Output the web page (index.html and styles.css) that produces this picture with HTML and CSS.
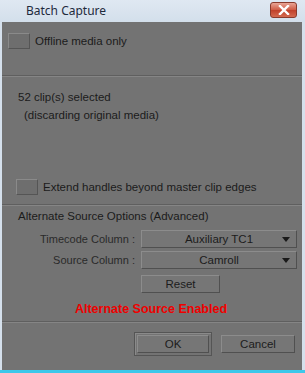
FILE: index.html
```html
<!DOCTYPE html>
<html lang="en">
<head>
  <meta charset="UTF-8" />
  <title>Batch Capture</title>
  <link rel="stylesheet" href="styles.css">
</head>
<body>
  <div class="window">
    <div class="titlebar">
      <span class="title">Batch Capture</span>
      <span class="close-btn">
        <svg width="12" height="10" viewBox="0 0 12 10">
          <path d="M2 1 L10 9 M10 1 L2 9" stroke="#fff" stroke-width="2.4" stroke-linecap="square" />
        </svg>
      </span>
    </div>

    <div class="content">
      <div class="section top">
        <label class="check-row">
          <span class="checkbox"></span>
          <span>Offline media only</span>
        </label>
      </div>

      <div class="section info">
        <div class="line">52 clip(s) selected</div>
        <div class="line indent">(discarding original media)</div>
        <label class="check-row extend">
          <span class="checkbox"></span>
          <span>Extend handles beyond master clip edges</span>
        </label>
      </div>

      <div class="section alt">
        <div class="alt-title">Alternate Source Options (Advanced)</div>
        <div class="form-row">
          <span class="form-label">Timecode Column :</span>
          <span class="dropdown">Auxiliary TC1<span class="arrow"></span></span>
        </div>
        <div class="form-row">
          <span class="form-label">Source Column :</span>
          <span class="dropdown">Camroll<span class="arrow"></span></span>
        </div>
        <div class="form-row reset-row">
          <span class="form-label"></span>
          <button class="btn reset-btn">Reset</button>
        </div>
        <div class="enabled">Alternate Source Enabled</div>
      </div>

      <div class="section buttons">
        <span class="ok-wrap"><button class="btn ok-btn">OK</button></span>
        <button class="btn cancel-btn">Cancel</button>
      </div>
    </div>
  </div>
</body>
</html>
```

FILE: styles.css
```css
body {
  margin: 0;
  background: #e9eef4;
  font-family: "Liberation Sans", Arial, sans-serif;
}

.window {
  width: 305px;
  height: 373px;
  display: flex;
  flex-direction: column;
  background: #d5e0ec;
  box-sizing: border-box;
  border-bottom: 3px solid #3cc8ea;
}

.titlebar {
  height: 22px;
  display: flex;
  align-items: center;
  justify-content: space-between;
  padding: 0 8px 0 26px;
  background: linear-gradient(#dfe8f2, #d3dfeb);
}

.title {
  font-family: "Noto Sans", sans-serif;
  font-size: 12px;
  color: #1e2a3c;
  margin-top: -1px;
}

.close-btn {
  width: 25px;
  height: 14px;
  border: 1px solid #8a3a2c;
  border-radius: 3px;
  background: linear-gradient(#e9a595, #cf5a43 50%, #c0402a 51%, #d46a50);
  display: flex;
  align-items: center;
  justify-content: center;
  margin-top: -3px;
}

.content {
  flex: 1;
  margin: 0 3px 0 2px;
  background: #737373;
  display: flex;
  flex-direction: column;
  color: #1b1b1b;
  font-size: 11.5px;
}

.section {
  border-bottom: 1px solid #5f5f5f;
  box-shadow: 0 1px 0 #858585;
}

.top {
  height: 54px;
  padding: 11px 0 0 6px;
  box-sizing: border-box;
}

.check-row {
  display: flex;
  align-items: center;
  gap: 5px;
}

.checkbox {
  width: 20px;
  height: 14px;
  background: #6e6e6e;
  border: 1px solid;
  border-color: #8a8a8a #555 #555 #8a8a8a;
}

.info {
  height: 129px;
  padding: 15px 0 0 16px;
  box-sizing: border-box;
}

.line {
  height: 18px;
}

.indent {
  padding-left: 6px;
}

.extend {
  margin-top: 52px;
  margin-left: -2px;
}

.alt {
  height: 117px;
  padding-top: 4px;
  box-sizing: border-box;
}

.alt-title {
  padding-left: 16px;
  height: 14px;
  line-height: 14px;
  margin-bottom: 7px;
}

.form-row {
  display: flex;
  align-items: center;
  height: 18px;
  margin-bottom: 3px;
}

.reset-row {
  margin-top: 6px;
  margin-bottom: 9px;
}

.form-label {
  width: 133px;
  text-align: right;
  padding-right: 6px;
  color: #2a2a2a;
  font-size: 11px;
}

.dropdown {
  position: relative;
  width: 156px;
  height: 18px;
  box-sizing: border-box;
  border: 1px solid;
  border-color: #8c8c8c #505050 #505050 #8c8c8c;
  background: #767676;
  text-align: center;
  line-height: 16px;
  color: #1c1c1c;
}

.arrow {
  position: absolute;
  right: 6px;
  top: 6px;
  border-left: 4px solid transparent;
  border-right: 4px solid transparent;
  border-top: 5px solid #1a1a1a;
}

.btn {
  font-family: "Liberation Sans", Arial, sans-serif;
  font-size: 11.5px;
  color: #1c1c1c;
  background: #767676;
  border: 1px solid;
  border-color: #8c8c8c #505050 #505050 #8c8c8c;
  padding: 0;
}

.reset-btn {
  width: 79px;
  height: 18px;
}

.enabled {
  text-align: center;
  color: #f00000;
  font-weight: bold;
  font-size: 12.5px;
  line-height: 14px;
  padding-right: 2px;
}

.buttons {
  flex: 1;
  border-bottom: none;
  box-shadow: none;
  display: flex;
  align-items: flex-start;
  padding: 10px 0 0 132px;
}

.ok-wrap {
  border: 1px solid #555;
  box-shadow: inset 1px 1px 0 #8a8a8a;
  padding: 2px;
  margin-right: 9px;
}

.ok-btn {
  width: 72px;
  height: 18px;
}

.cancel-btn {
  width: 74px;
  height: 18px;
  margin-top: 3px;
}
```
